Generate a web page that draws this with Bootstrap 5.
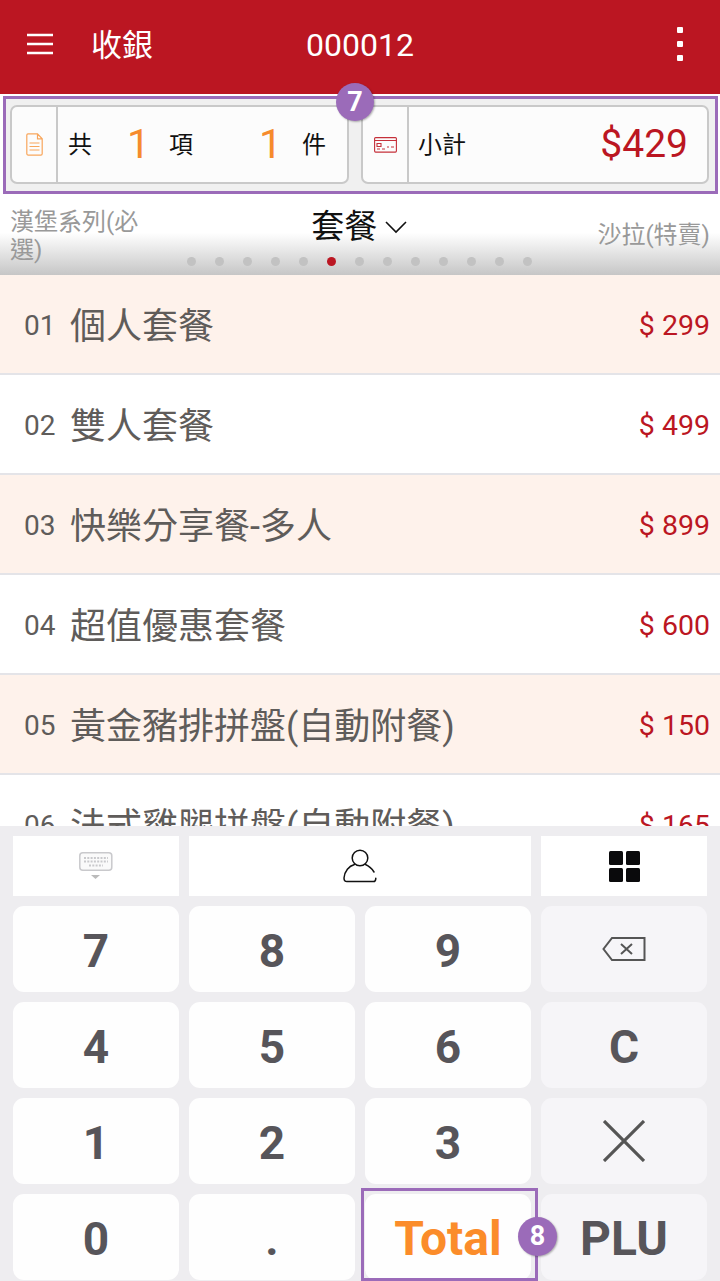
<!DOCTYPE html>
<html lang="zh-Hant"><head><meta charset="utf-8">
<link href="https://cdn.jsdelivr.net/npm/bootstrap@5.3.0/dist/css/bootstrap.min.css" rel="stylesheet">
<style>
html,body{height:100%;margin:0}
body{font-family:Roboto,"Noto Sans CJK TC",sans-serif;background:#fff;overflow:hidden}
.app{width:720px;height:1281px;position:relative;overflow:hidden}
.topbar{height:94px;background:#bb1622;color:#fff;padding:0 0 4px 27px}
.topbar .ttl{font-size:31px;margin-left:38px;width:215px;line-height:1}
.topbar .num{font-size:32px;line-height:1}
.burger{margin-bottom:3px}
.kebab{margin-right:30px}
.summary{height:98px;background:#f0f0f0;border:3px solid #9b6bb9;margin:2px 2px 0 3px;padding:6px 6px 6px 4px;gap:12px;position:relative}
.sumbox{background:#fcfcfc;border:2px solid #c9c9c9;border-radius:7px;height:79px;color:#111;font-size:24px}
.sumbox.a{width:340px}.sumbox.b{width:349px}
.sumicon{width:46px;flex:none;border-right:2px solid #c9c9c9}
.sumtext{padding-left:10px}
.sumtext.end{padding:0 19px 0 9px}
.cnt{font-size:41px;color:#f68b2c;line-height:1}
.c1{margin-left:35px;width:29px}
.c2{margin-left:13px}
.c3{margin-left:66px;width:43px}
.total{font-size:39px;color:#bb1622;line-height:1}
.tabs{height:81px;background:linear-gradient(#fff 0,#fff 48%,#c6c6c6 100%);position:relative;padding:0 10px}
.side{color:#999;font-size:24px;line-height:28px}
.side.l{width:130px;margin-top:14px}
.side.r{margin-top:27px}
.cur{color:#111;font-size:33px;line-height:1;margin:16px 0 0 -19px}
.chev{margin:11px 0 0 8px}
.dots{position:absolute;left:187px;top:63px;gap:19px}
.dot{width:9px;height:9px;border-radius:50%;background:#c2c2c2}
.dot.on{background:#bb1622}
.menu{height:551px;overflow:hidden}
.item{height:100px;border-bottom:2px solid #e4e4e8;padding:6px 10px 0 24px;color:#5f5c5a}
.item.odd{background:#fef2eb}
.idx{font-size:28px;width:46px;flex:none;margin-bottom:2px}
.nm{font-size:36px;line-height:1}
.pr{color:#bb1622;font-size:28.500px;margin-left:auto;margin-bottom:2px}
.pad{height:455px;background:#eeedf0;padding:10px 13px 0;display:grid;grid-template-columns:repeat(4,166px);grid-template-rows:60px repeat(4,86px);gap:10px;box-sizing:border-box}
.key{background:#fefefe;border-radius:11px;font-size:46px;font-weight:700;color:#57555a;line-height:1;padding-top:4px}
.key.fn{background:#f6f5f8}
.key.sq{border-radius:0;background:#fff}
.key.ic{padding-top:0}
.key.w2{grid-column:span 2}
.key.big{font-size:48px}
.key.tot{color:#fb8c2a}
.frame{position:absolute;left:361px;top:1188px;width:177px;height:93px;border:3px solid #9b6bb9;pointer-events:none}
.pin{position:absolute;width:38px;height:38px;border-radius:50%;background:#9b6bb9;color:#fff;font-weight:700;font-size:27px;line-height:1;box-shadow:1px 1px 2px rgba(0,0,0,.3)}
.pin.p7{left:336px;top:83px}
.pin.p8{left:518px;top:1217px;width:39px;height:39px}
</style></head><body>
<div class="app d-flex flex-column">
<header class="topbar d-flex align-items-center flex-shrink-0">
<svg class="burger" width="26" height="22" viewBox="0 0 26 22"><path d="M0 2h26M0 11h26M0 20h26" stroke="#fff" stroke-width="2.4" fill="none"/></svg>
<span class="ttl">收銀</span><span class="num">000012</span>
<svg class="kebab ms-auto" width="14" height="36" viewBox="0 0 14 36"><g fill="#fff"><rect x="1" y="0" width="6" height="6" rx="1"/><rect x="1" y="14" width="6" height="6" rx="1"/><rect x="1" y="28" width="6" height="6" rx="1"/></g></svg>
</header>
<section class="summary d-flex flex-shrink-0">
<div class="sumbox a d-flex">
<div class="sumicon d-flex align-items-center justify-content-center"><svg width="17" height="23" viewBox="0 0 17 23" fill="none" stroke="#f8a65c" stroke-width="1.2"><path d="M2 .8h9.5l4.7 5v15a1.3 1.3 0 0 1-1.3 1.3H2A1.3 1.3 0 0 1 .8 20.800V2A1.300 1.300 0 0 1 2 .8zM11.500 .8v5h4.700M3.500 10h10M3.500 13.500h10M3.500 17h10"/></svg></div>
<div class="sumtext d-flex align-items-center flex-grow-1"><span>共</span><span class="cnt c1">1</span><span class="c2">項</span><span class="cnt c3">1</span><span>件</span></div>
</div>
<div class="sumbox b d-flex">
<div class="sumicon d-flex align-items-center justify-content-center"><svg width="23" height="16" viewBox="0 0 23 16" fill="none" stroke="#c5303a" stroke-width="1.100"><rect x=".6" y=".6" width="21.800" height="14.500" rx="1"/><path d="M.6 3.500h21.800M3 6.500h4v3H3zM3 12h3M8 12h3M13 10h2M17 10h3"/></svg></div>
<div class="sumtext end d-flex align-items-center flex-grow-1"><span>小計</span><span class="total ms-auto">$429</span></div>
</div>
</section>
<nav class="tabs d-flex flex-shrink-0 justify-content-between">
<div class="side l">漢堡系列(必選)</div>
<div class="cur d-flex align-items-start">套餐<svg class="chev" width="22" height="13" viewBox="0 0 22 13" fill="none" stroke="#111" stroke-width="1.600"><path d="M1 1l10 10L21 1"/></svg></div>
<div class="side r">沙拉(特賣)</div>
<div class="dots d-flex"><i class="dot"></i><i class="dot"></i><i class="dot"></i><i class="dot"></i><i class="dot"></i><i class="dot on"></i><i class="dot"></i><i class="dot"></i><i class="dot"></i><i class="dot"></i><i class="dot"></i><i class="dot"></i><i class="dot"></i></div>
</nav>
<main class="menu flex-shrink-0">
<div class="item odd d-flex align-items-center"><span class="idx">01</span><span class="nm">個人套餐</span><span class="pr">$ 299</span></div>
<div class="item d-flex align-items-center"><span class="idx">02</span><span class="nm">雙人套餐</span><span class="pr">$ 499</span></div>
<div class="item odd d-flex align-items-center"><span class="idx">03</span><span class="nm">快樂分享餐-多人</span><span class="pr">$ 899</span></div>
<div class="item d-flex align-items-center"><span class="idx">04</span><span class="nm">超值優惠套餐</span><span class="pr">$ 600</span></div>
<div class="item odd d-flex align-items-center"><span class="idx">05</span><span class="nm">黃金豬排拼盤(自動附餐)</span><span class="pr">$ 150</span></div>
<div class="item d-flex align-items-center"><span class="idx">06</span><span class="nm">法式雞腿拼盤(自動附餐)</span><span class="pr">$ 165</span></div>
</main>
<div class="pad flex-shrink-0">
<div class="key sq ic d-flex align-items-center justify-content-center"><svg width="34" height="28" viewBox="0 0 34 28"><rect x=".8" y=".8" width="32" height="17.500" rx="3" fill="#fafafa" stroke="#c9c9cc" stroke-width="1.500"/><path d="M5 6h24M5 9.500h24M10 13.500h14" stroke="#c9c9cc" stroke-width="1.800" stroke-dasharray="2 1.300" fill="none"/><path d="M12 23h9l-4.500 4z" fill="#bbb"/></svg></div>
<div class="key sq ic w2 d-flex align-items-center justify-content-center"><svg width="34" height="34" viewBox="0 0 34 34" fill="none" stroke="#111" stroke-width="1.500" stroke-linecap="round"><circle cx="17" cy="9" r="7.800"/><path d="M11.500 15.500C6 17 1.500 22 1 29c0 2.500 1 3.600 3 3.600h26.500c1.600 0 2.300-1.400 2.300-3.400"/><path d="M22.500 15.500c3.500 1.500 6.500 4.200 8.500 7.500"/></svg></div>
<div class="key sq ic d-flex align-items-center justify-content-center"><svg width="31" height="31" viewBox="0 0 31 31" fill="#0a0a0c"><rect width="14" height="14" rx="1.500"/><rect x="17" width="14" height="14" rx="1.500"/><rect y="17" width="14" height="14" rx="1.500"/><rect x="17" y="17" width="14" height="14" rx="1.500"/></svg></div>
<div class="key d-flex align-items-center justify-content-center">7</div>
<div class="key d-flex align-items-center justify-content-center">8</div>
<div class="key d-flex align-items-center justify-content-center">9</div>
<div class="key fn ic d-flex align-items-center justify-content-center"><svg width="44" height="24" viewBox="0 0 44 24" fill="none" stroke="#555" stroke-width="2"><path d="M42.500 1H10L1.500 12 10 23h32.500zM19 7l11 10M30 7L19 17"/></svg></div>
<div class="key d-flex align-items-center justify-content-center">4</div>
<div class="key d-flex align-items-center justify-content-center">5</div>
<div class="key d-flex align-items-center justify-content-center">6</div>
<div class="key fn d-flex align-items-center justify-content-center">C</div>
<div class="key d-flex align-items-center justify-content-center">1</div>
<div class="key d-flex align-items-center justify-content-center">2</div>
<div class="key d-flex align-items-center justify-content-center">3</div>
<div class="key fn ic d-flex align-items-center justify-content-center"><svg width="42" height="42" viewBox="0 0 42 42" fill="none" stroke="#555" stroke-width="3.200"><path d="M1 1l40 40M41 1L1 41"/></svg></div>
<div class="key d-flex align-items-center justify-content-center">0</div>
<div class="key d-flex align-items-center justify-content-center">.</div>
<div class="key big tot d-flex align-items-center justify-content-center">Total</div>
<div class="key big fn d-flex align-items-center justify-content-center">PLU</div>
</div>
<div class="frame"></div>
<div class="pin p7 d-flex align-items-center justify-content-center">7</div>
<div class="pin p8 d-flex align-items-center justify-content-center">8</div>
</div>
<script src="https://cdn.jsdelivr.net/npm/bootstrap@5.3.0/dist/js/bootstrap.bundle.min.js"></script>
</body></html>
